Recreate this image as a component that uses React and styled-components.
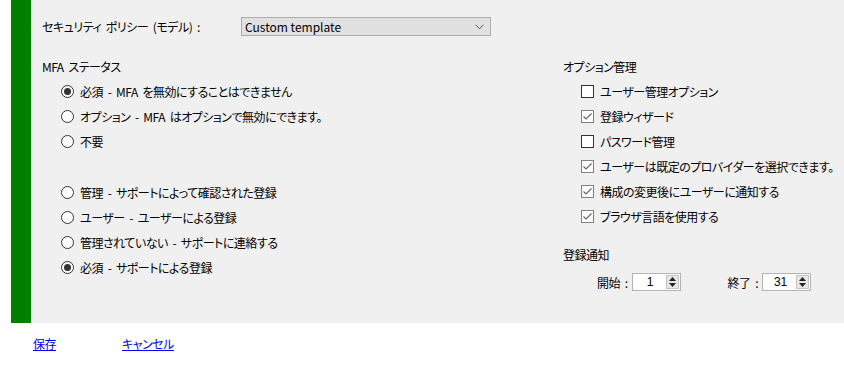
import styled, { createGlobalStyle } from "styled-components";

const GlobalStyle = createGlobalStyle`
  body {
    margin: 0;
    background: #ffffff;
    font-family: "Noto Sans CJK JP", "Liberation Sans", sans-serif;
    font-size: 12px;
    letter-spacing: -0.5px;
    word-spacing: 2.5px;
    color: #000;
    font-feature-settings: "palt";
  }
`;

const Frame = styled.div`
  display: flex;
  margin-left: 11px;
  height: 323px;
`;

const GreenBar = styled.div`
  width: 20px;
  background: #008000;
`;

const Panel = styled.div`
  flex: 1;
  background: #f0f0f0;
  padding: 17px 0 0 11px;
  box-sizing: border-box;
`;

const PolicyRow = styled.div`
  display: flex;
  align-items: center;
  height: 19px;
`;

const PolicyLabel = styled.span`
  width: 199px;
`;

const Select = styled.div`
  width: 250px;
  height: 19px;
  box-sizing: border-box;
  background: #e1e1e1;
  border: 1px solid #adadad;
  display: flex;
  align-items: center;
  justify-content: space-between;
  padding: 0 6px 0 3px;
  letter-spacing: 0;
  word-spacing: 0;
`;

const Columns = styled.div`
  display: flex;
  margin-top: 18px;
`;

const Column = styled.div`
  width: ${(p) => (p.$width ? `${p.$width}px` : "auto")};
  flex: ${(p) => (p.$width ? "none" : "1")};
  display: flex;
  flex-direction: column;
  white-space: nowrap;
`;

const Heading = styled.div`
  height: 25px;
  line-height: 25px;
`;

const Row = styled.div`
  display: flex;
  align-items: center;
  height: 25px;
  padding-left: ${(p) => p.$indent}px;
  gap: 6px;
`;

const Spacer = styled.div`
  height: ${(p) => p.$h}px;
`;

const Radio = styled.span`
  width: 13px;
  height: 13px;
  box-sizing: border-box;
  border-radius: 50%;
  border: 1px solid #333;
  background: #fff;
  display: flex;
  align-items: center;
  justify-content: center;
  &::after {
    content: "";
    width: 7px;
    height: 7px;
    border-radius: 50%;
    background: ${(p) => (p.$checked ? "#333" : "transparent")};
  }
`;

const Box = styled.span`
  width: 13px;
  height: 13px;
  box-sizing: border-box;
  border: 1px solid ${(p) => (p.$checked ? "#808080" : "#333")};
  background: #fff;
  display: flex;
  align-items: center;
  justify-content: center;
`;

const SpinRow = styled.div`
  display: flex;
  align-items: center;
  gap: 47px;
  padding-left: 34px;
  margin-top: 6px;
`;

const SpinGroup = styled.div`
  display: flex;
  align-items: center;
  gap: 4px;
`;

const SpinBox = styled.div`
  width: 49px;
  height: 18px;
  box-sizing: border-box;
  border: 1px solid #b4b4b4;
  background: #fff;
  display: flex;
  align-items: center;
`;

const SpinValue = styled.span`
  flex: 1;
  text-align: center;
  font-family: "Liberation Sans", sans-serif;
  font-size: 12px;
  letter-spacing: 0;
  padding-left: 2px;
`;

const SpinButtons = styled.div`
  width: 13px;
  height: 14px;
  margin-right: 1px;
  background: #e6e6e6;
  border: 1px solid #c4c4c4;
  box-sizing: border-box;
  display: flex;
  flex-direction: column;
  align-items: center;
  justify-content: space-around;
`;

const Links = styled.div`
  display: flex;
  gap: 66px;
  padding: 12px 0 0 33px;
`;

const Link = styled.a`
  color: #0000ee;
  text-decoration: underline;
  cursor: pointer;
`;

const Check = () => (
  <svg width="11" height="11" viewBox="0 0 11 11">
    <path d="M1.5 5.5 L4 8 L9.5 2.5" fill="none" stroke="#666" strokeWidth="1.2" />
  </svg>
);

const Spin = ({ label, value }) => (
  <SpinGroup>
    <span>{label}</span>
    <SpinBox>
      <SpinValue>{value}</SpinValue>
      <SpinButtons>
        <svg width="7" height="4" viewBox="0 0 7 4">
          <path d="M0 4 L3.5 0 L7 4 Z" fill="#222" />
        </svg>
        <svg width="7" height="4" viewBox="0 0 7 4">
          <path d="M0 0 L3.5 4 L7 0 Z" fill="#222" />
        </svg>
      </SpinButtons>
    </SpinBox>
  </SpinGroup>
);

const radiosTop = [
  ["必須 - MFA を無効にすることはできません", true],
  ["オプション - MFA はオプションで無効にできます。", false],
  ["不要", false],
];

const radiosBottom = [
  ["管理 - サポートによって確認された登録", false],
  ["ユーザー - ユーザーによる登録", false],
  ["管理されていない - サポートに連絡する", false],
  ["必須 - サポートによる登録", true],
];

const options = [
  ["ユーザー管理オプション", false],
  ["登録ウィザード", true],
  ["パスワード管理", false],
  ["ユーザーは既定のプロバイダーを選択できます。", true],
  ["構成の変更後にユーザーに通知する", true],
  ["ブラウザ言語を使用する", true],
];

export default function App() {
  return (
    <>
      <GlobalStyle />
      <Frame>
        <GreenBar />
        <Panel>
          <PolicyRow>
            <PolicyLabel>セキュリティ ポリシー (モデル) :</PolicyLabel>
            <Select>
              <span>Custom template</span>
              <svg width="9" height="6" viewBox="0 0 9 6">
                <path d="M0.5 0.8 L4.5 4.8 L8.5 0.8" fill="none" stroke="#555" strokeWidth="1" />
              </svg>
            </Select>
          </PolicyRow>
          <Columns>
            <Column $width={521}>
              <Heading>MFA ステータス</Heading>
              {radiosTop.map(([t, c]) => (
                <Row key={t} $indent={19}>
                  <Radio $checked={c} />
                  <span>{t}</span>
                </Row>
              ))}
              <Spacer $h={26} />
              {radiosBottom.map(([t, c]) => (
                <Row key={t} $indent={19}>
                  <Radio $checked={c} />
                  <span>{t}</span>
                </Row>
              ))}
            </Column>
            <Column>
              <Heading>オプション管理</Heading>
              {options.map(([t, c]) => (
                <Row key={t} $indent={18}>
                  <Box $checked={c}>{c && <Check />}</Box>
                  <span>{t}</span>
                </Row>
              ))}
              <Spacer $h={13} />
              <Heading>登録通知</Heading>
              <SpinRow>
                <Spin label="開始 :" value="1" />
                <Spin label="終了 :" value="31" />
              </SpinRow>
            </Column>
          </Columns>
        </Panel>
      </Frame>
      <Links>
        <Link>保存</Link>
        <Link>キャンセル</Link>
      </Links>
    </>
  );
}
